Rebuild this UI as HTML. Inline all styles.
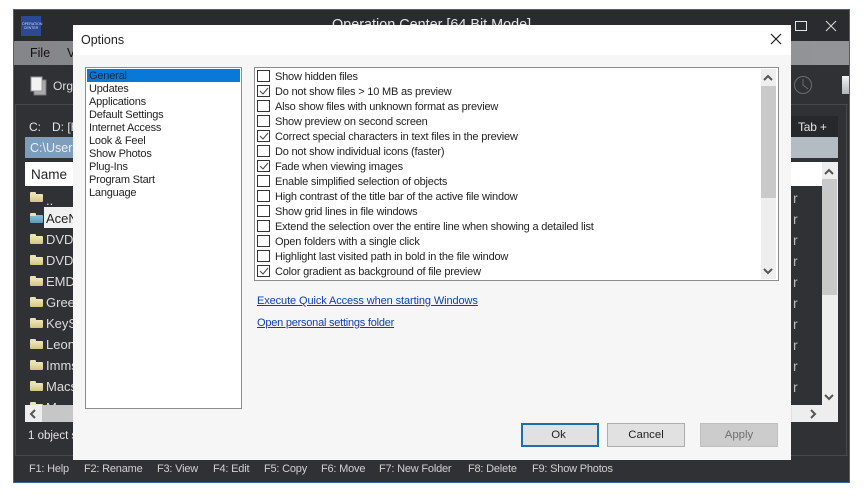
<!DOCTYPE html>
<html><head><meta charset="utf-8"><style>
html,body{margin:0;padding:0;width:867px;height:499px;overflow:hidden;background:#fff;font-family:"Liberation Sans",sans-serif}
div,a,span{position:absolute;white-space:nowrap}
svg{position:absolute}
.w{color:#e4e4e4}
.li{left:89px;font-size:11px;letter-spacing:-.2px;color:#222;line-height:13px;height:13px;margin-top:1px}
.cb{left:257px;width:11px;height:10px;border:1px solid #333;background:#fff}
.t{left:275px;font-size:11px;letter-spacing:-.2px;color:#222;line-height:15px;height:15px;margin-top:1px}
.r{left:793px;font-size:14px;color:#bbb;line-height:16px}
.n{left:46px;font-size:13px;color:#ddd;line-height:16px;width:27px;overflow:hidden}
.fk{top:462px;font-size:11px;letter-spacing:-.2px;color:#d0d0d0;line-height:14px}
.btn{top:423px;height:22px;width:76px;border:1px solid #adadad;background:#e1e1e1;text-align:center;font-size:11.4px;line-height:22px;color:#222}
.fo{left:30px;width:13px;height:8px;background:linear-gradient(#efe8bb,#d3c582);border-radius:1px}
.fo:before{content:"";position:absolute;left:0;top:-2px;width:6px;height:3px;background:#e9e2b5;border-radius:1px 1px 0 0}
</style></head><body>

<div style="left:13px;top:9px;width:835px;height:472px;border:1px solid #2a68a8;background:#303135"></div>
<div style="left:14px;top:10px;width:835px;height:31px;background:#2a2b2f"></div>
<div style="left:21px;top:16px;width:20px;height:20px;background:#2c4a94;color:#cdd6ee;font-size:3.5px;line-height:4px;text-align:center"><span style="left:1px;top:6px;width:18px">OPERATION<br>CENTER</span></div>
<div style="left:332px;top:17px;font-size:14.4px;color:#e6e6e6">Operation Center [64 Bit Mode]</div>
<div style="left:795px;top:21px;width:10px;height:8px;border:1px solid #e4e4e4"></div>
<svg style="left:825px;top:20px" width="12" height="12"><path d="M1 1L11 11M11 1L1 11" stroke="#ddd" stroke-width="1"/></svg>

<div style="left:14px;top:41px;width:835px;height:24px;background:linear-gradient(90deg,#858689,#939498)"></div>
<div style="left:30px;top:46px;font-size:12.5px;color:#111">File</div>
<div style="left:67px;top:46px;font-size:12.5px;color:#111">V</div>

<svg style="left:30px;top:76px" width="18" height="20"><rect x="4" y="4" width="12" height="15" fill="#aaa" stroke="#777"/><rect x="1" y="1" width="11" height="14" fill="#f2f2f2" stroke="#999"/></svg>
<div style="left:53px;top:79px;font-size:12px;color:#ddd">Org</div>
<svg style="left:793px;top:75px" width="20" height="20"><circle cx="10" cy="10" r="8.5" fill="none" stroke="#6c6d70" stroke-width="1"/><path d="M10 4V10L15 14" fill="none" stroke="#6c6d70"/></svg>
<div style="left:842px;top:76px;width:7px;height:18px;background:linear-gradient(#f4f4f4,#b0b4bc)"></div>

<div style="left:15px;top:104px;width:833px;height:1px;background:#48494d"></div>
<div style="left:15px;top:104px;width:1px;height:352px;background:#48494d"></div>
<div style="left:15px;top:455px;width:833px;height:1px;background:#48494d"></div>
<div style="left:846px;top:104px;width:1px;height:352px;background:#48494d"></div>

<div class="w" style="left:29px;top:120px;font-size:12px">C:</div>
<div class="w" style="left:52px;top:120px;font-size:12px">D: [H</div>
<div style="left:791px;top:116px;width:47px;height:21px;background:#27282b"></div>
<div class="w" style="left:798px;top:120px;font-size:12px;letter-spacing:-.2px">Tab +</div>
<div style="left:25px;top:137px;width:813px;height:21px;background:linear-gradient(90deg,#7d9cbc,#b3bcc3 90%)"></div>
<div style="left:30px;top:141px;font-size:12.5px;color:#e8eef4">C:\Users</div>

<div style="left:25px;top:162px;width:797px;height:24px;background:#fff"></div>
<div style="left:31px;top:167px;font-size:13.5px;color:#222">Name</div>

<div class="fo" style="top:194px"></div>
<div class="fo" style="top:215px;background:linear-gradient(#8cc0d6,#5e9ab8)"></div>
<div class="fo" style="top:236px"></div><div class="fo" style="top:257px"></div>
<div class="fo" style="top:278px"></div><div class="fo" style="top:299px"></div>
<div class="fo" style="top:320px"></div><div class="fo" style="top:341px"></div>
<div class="fo" style="top:362px"></div><div class="fo" style="top:383px"></div>
<div class="fo" style="top:404px"></div>
<div class="n" style="top:193px">..</div>
<div style="left:44px;top:207px;width:29px;height:21px;background:#f1f1f1"></div>
<div class="n" style="top:211px;color:#222">AceN</div>
<div class="n" style="top:232px">DVD</div><div class="n" style="top:253px">DVD</div>
<div class="n" style="top:274px">EMD</div><div class="n" style="top:295px">Gree</div>
<div class="n" style="top:316px">KeyS</div><div class="n" style="top:337px">Leon</div>
<div class="n" style="top:358px">Imms</div><div class="n" style="top:379px">Macs</div>
<div class="n" style="top:400px">Ma</div>
<div class="r" style="top:190px">r</div><div class="r" style="top:211px">r</div>
<div class="r" style="top:232px">r</div><div class="r" style="top:253px">r</div>
<div class="r" style="top:274px">r</div><div class="r" style="top:295px">r</div>
<div class="r" style="top:316px">r</div><div class="r" style="top:337px">r</div>
<div class="r" style="top:358px">r</div><div class="r" style="top:379px">r</div>

<div style="left:822px;top:162px;width:16px;height:245px;background:#eeeeee"></div>
<div style="left:822px;top:179px;width:15px;height:116px;background:#c9c9c9"></div>
<svg style="left:824px;top:168px" width="10" height="8"><path d="M1 6L5 2L9 6" fill="none" stroke="#555" stroke-width="2"/></svg>
<svg style="left:824px;top:393px" width="10" height="8"><path d="M1 2L5 6L9 2" fill="none" stroke="#555" stroke-width="2"/></svg>
<div style="left:25px;top:405px;width:813px;height:17px;background:#eeeeee"></div>
<div style="left:42px;top:405px;width:750px;height:17px;background:linear-gradient(90deg,#c6c6c6,#e0e0e0)"></div>
<svg style="left:29px;top:409px" width="8" height="10"><path d="M6 1L2 5L6 9" fill="none" stroke="#555" stroke-width="2"/></svg>
<svg style="left:809px;top:409px" width="8" height="10"><path d="M2 1L6 5L2 9" fill="none" stroke="#555" stroke-width="2"/></svg>
<div class="w" style="left:28px;top:430px;font-size:11.5px">1 object s</div>

<div class="fk" style="left:29px">F1: Help</div>
<div class="fk" style="left:84px">F2: Rename</div>
<div class="fk" style="left:157px">F3: View</div>
<div class="fk" style="left:213px">F4: Edit</div>
<div class="fk" style="left:264px">F5: Copy</div>
<div class="fk" style="left:321px">F6: Move</div>
<div class="fk" style="left:379px">F7: New Folder</div>
<div class="fk" style="left:468px">F8: Delete</div>
<div class="fk" style="left:532px">F9: Show Photos</div>

<!-- Dialog -->
<div style="left:73px;top:25px;width:718px;height:435px;background:#f6f6f6"></div>
<div style="left:73px;top:25px;width:718px;height:30px;background:#fff"></div>
<div style="left:81px;top:33px;font-size:12.5px;color:#222">Options</div>
<svg style="left:770px;top:33px" width="12" height="12"><path d="M1 1L11 11M11 1L1 11" stroke="#111" stroke-width="1.1"/></svg>

<div style="left:85px;top:67px;width:155px;height:340px;border:1px solid #8c8c8c;background:#fff"></div>
<div style="left:87px;top:69px;width:153px;height:13px;background:#0a78d7"></div>
<div class="li" style="top:69px;color:#1a2a3a">General</div>
<div class="li" style="top:82px">Updates</div>
<div class="li" style="top:95px">Applications</div>
<div class="li" style="top:108px">Default Settings</div>
<div class="li" style="top:121px">Internet Access</div>
<div class="li" style="top:134px">Look &amp; Feel</div>
<div class="li" style="top:147px">Show Photos</div>
<div class="li" style="top:160px">Plug-Ins</div>
<div class="li" style="top:173px">Program Start</div>
<div class="li" style="top:186px">Language</div>

<div style="left:254px;top:67px;width:523px;height:212px;border:1px solid #8c8c8c;background:#fff"></div>
<div style="left:761px;top:69px;width:15px;height:210px;background:#eeeeee"></div>
<div style="left:761px;top:86px;width:15px;height:112px;background:#c9c9c9"></div>
<svg style="left:763px;top:74px" width="10" height="8"><path d="M1 6L5 2L9 6" fill="none" stroke="#555" stroke-width="2"/></svg>
<svg style="left:763px;top:267px" width="10" height="8"><path d="M1 2L5 6L9 2" fill="none" stroke="#555" stroke-width="2"/></svg>

<div class="cb" style="top:70px"></div><div class="t" style="top:69px">Show hidden files</div>
<div class="cb" style="top:85px"></div><div class="t" style="top:84px">Do not show files &gt; 10 MB as preview</div>
<div class="cb" style="top:100px"></div><div class="t" style="top:99px">Also show files with unknown format as preview</div>
<div class="cb" style="top:115px"></div><div class="t" style="top:114px">Show preview on second screen</div>
<div class="cb" style="top:130px"></div><div class="t" style="top:129px">Correct special characters in text files in the preview</div>
<div class="cb" style="top:145px"></div><div class="t" style="top:144px">Do not show individual icons (faster)</div>
<div class="cb" style="top:160px"></div><div class="t" style="top:159px">Fade when viewing images</div>
<div class="cb" style="top:175px"></div><div class="t" style="top:174px">Enable simplified selection of objects</div>
<div class="cb" style="top:190px"></div><div class="t" style="top:189px">High contrast of the title bar of the active file window</div>
<div class="cb" style="top:205px"></div><div class="t" style="top:204px">Show grid lines in file windows</div>
<div class="cb" style="top:220px"></div><div class="t" style="top:219px">Extend the selection over the entire line when showing a detailed list</div>
<div class="cb" style="top:235px"></div><div class="t" style="top:234px">Open folders with a single click</div>
<div class="cb" style="top:250px"></div><div class="t" style="top:249px">Highlight last visited path in bold in the file window</div>
<div class="cb" style="top:265px"></div><div class="t" style="top:264px">Color gradient as background of file preview</div>
<svg style="left:258px;top:85px" width="12" height="12"><path d="M2 6L5 9L10 3" fill="none" stroke="#444" stroke-width="1"/></svg>
<svg style="left:258px;top:130px" width="12" height="12"><path d="M2 6L5 9L10 3" fill="none" stroke="#444" stroke-width="1"/></svg>
<svg style="left:258px;top:160px" width="12" height="12"><path d="M2 6L5 9L10 3" fill="none" stroke="#444" stroke-width="1"/></svg>
<svg style="left:258px;top:265px" width="12" height="12"><path d="M2 6L5 9L10 3" fill="none" stroke="#444" stroke-width="1"/></svg>

<a style="left:257px;top:294px;font-size:11px;letter-spacing:-.1px;line-height:14px;color:#0a3fb4;text-decoration:underline">Execute Quick Access when starting Windows</a>
<a style="left:257px;top:316px;font-size:11px;letter-spacing:-.23px;line-height:14px;color:#0a3fb4;text-decoration:underline">Open personal settings folder</a>

<div class="btn" style="left:521px;width:71px;padding-right:3px;height:20px;line-height:20px;border:2px solid #1c6fa8;background:#e1e1e1">Ok</div>
<div class="btn" style="left:607px">Cancel</div>
<div class="btn" style="left:700px;background:#cccccc;color:#6f6f6f;border-color:#bfbfbf">Apply</div>
</body></html>
